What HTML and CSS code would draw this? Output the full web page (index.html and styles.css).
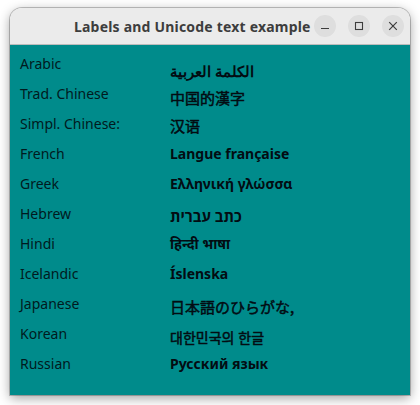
FILE: index.html
```html
<!DOCTYPE html>
<html lang="en">
<head>
<meta charset="utf-8">
<title>Labels and Unicode text example</title>
<link rel="stylesheet" href="styles.css">
</head>
<body>
<div class="window">
  <header class="titlebar">
    <div class="title">Labels and Unicode text example</div>
    <div class="controls">
      <button class="ctl"><svg width="10" height="10" viewBox="0 0 10 10"><path d="M1 7.5h8" stroke="#3d3d3d" stroke-width="1.2" fill="none"/></svg></button>
      <button class="ctl"><svg width="10" height="10" viewBox="0 0 10 10"><rect x="1.5" y="1.5" width="7" height="7" stroke="#3d3d3d" stroke-width="1.1" fill="none"/></svg></button>
      <button class="ctl"><svg width="10" height="10" viewBox="0 0 10 10"><path d="M1.2 1.2l7.6 7.6M8.8 1.2l-7.6 7.6" stroke="#3d3d3d" stroke-width="1.2" fill="none"/></svg></button>
    </div>
  </header>
  <main class="content">
    <div class="row"><span class="label">Arabic</span><span class="value arabic" dir="rtl" lang="ar">الكلمة العربية</span></div>
    <div class="row"><span class="label">Trad. Chinese</span><span class="value cjk trad" lang="zh-Hant">中国的漢字</span></div>
    <div class="row"><span class="label">Simpl. Chinese:</span><span class="value cjk simpl" lang="zh-Hans">汉语</span></div>
    <div class="row"><span class="label">French</span><span class="value">Langue française</span></div>
    <div class="row"><span class="label">Greek</span><span class="value">Ελληνική γλώσσα</span></div>
    <div class="row"><span class="label">Hebrew</span><span class="value hebrew" dir="rtl" lang="he">כתב עברית</span></div>
    <div class="row"><span class="label">Hindi</span><span class="value" lang="hi">हिन्दी भाषा</span></div>
    <div class="row"><span class="label">Icelandic</span><span class="value">Íslenska</span></div>
    <div class="row"><span class="label">Japanese</span><span class="value cjk japanese" lang="ja">日本語のひらがな,</span></div>
    <div class="row"><span class="label">Korean</span><span class="value cjk korean" lang="ko">대한민국의 한글</span></div>
    <div class="row"><span class="label">Russian</span><span class="value">Русский язык</span></div>
  </main>
</div>
</body>
</html>
```
FILE: styles.css
```css
html, body { margin: 0; padding: 0; background: #fff; }
body { width: 420px; height: 405px; overflow: hidden; padding: 8px 10px 10px; box-sizing: border-box; font-family: "Noto Sans", "Open Sans", sans-serif; }
.window { width: 400px; height: 387px; display: flex; flex-direction: column; border-radius: 12px 12px 0 0; box-shadow: 0 3px 12px rgba(0,0,0,.38), 0 0 0 1px rgba(0,0,0,.22); overflow: hidden; }
.titlebar { height: 36px; flex: none; background: #ebebeb; border-bottom: 1px solid #bcbcbc; display: flex; align-items: center; padding-right: 6px; }
.title { margin-left: 64px; flex: 1; font-weight: 700; font-size: 14px; color: #3d3d3d; white-space: nowrap; letter-spacing: .2px; }
.controls { display: flex; gap: 12px; }
.ctl { width: 22px; height: 22px; padding: 0; border: 0; border-radius: 50%; background: #dedede; display: flex; align-items: center; justify-content: center; }
.content { flex: 1; background: #008b8b; padding: 4px 10px 0; }
.row { height: 30px; display: grid; grid-template-columns: 150px 1fr; }
.label { font-size: 14px; line-height: 30px; color: #001a20; white-space: nowrap; }
.value { font-size: 14px; line-height: 30px; font-weight: 700; color: #030c12; white-space: nowrap; text-align: left; justify-self: start; }
.cjk { font-family: "Noto Sans CJK SC", "Noto Sans", sans-serif; font-weight: 400; font-size: 15px; line-height: 22px; -webkit-text-stroke: .5px #030c12; }
.arabic { font-size: 14.6px; padding-top: 11px; line-height: 23px; }
.hebrew { font-size: 15px; padding-top: 3px; line-height: 28px; }
.trad { padding-top: 8px; }
.simpl { padding-top: 6px; }
.japanese { padding-top: 3px; line-height: 30px; }
.korean { padding-top: 3px; line-height: 30px; font-size: 14px; }
```
